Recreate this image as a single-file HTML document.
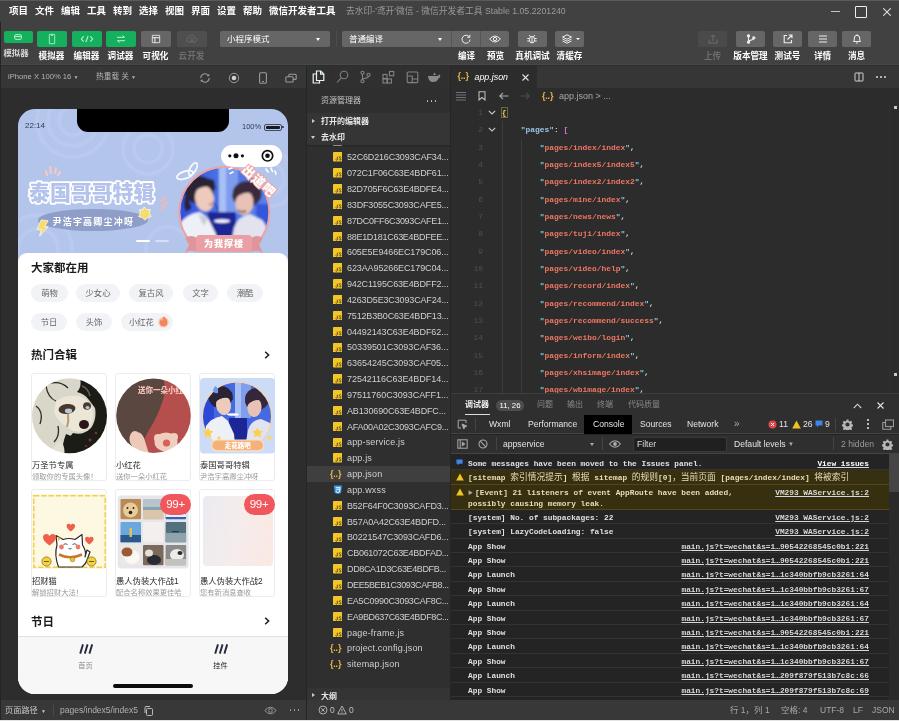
<!DOCTYPE html>
<html lang="zh"><head><meta charset="utf-8"><title>微信开发者工具</title>
<style>
*{box-sizing:border-box;margin:0;padding:0}
html,body{width:899px;height:721px;overflow:hidden;background:#2d2d2d}
body{position:relative;font-family:"Liberation Sans","Noto Sans CJK SC",sans-serif;font-size:9px;color:#ddd;-webkit-font-smoothing:antialiased}
.abs{position:absolute}
#root{position:absolute;left:0;top:0;width:899px;height:721px;will-change:transform}
#title{left:0;top:0;width:899px;height:22px;background:#414141;border-top:1px solid #5a5a5a}
#title .m{position:absolute;top:-1px;height:22px;line-height:22px;font-size:9.5px;color:#fff;font-weight:bold;white-space:nowrap}
#toolbar{left:0;top:22px;width:899px;height:43px;background:#414141;border-bottom:1px solid #484848}
.tb{position:absolute;top:9px;height:16px;border-radius:2px;background:#666}
.tb.g{background:#15b05e}
.tbl{position:absolute;top:28px;height:12px;line-height:12px;font-size:8.600px;color:#fff;font-weight:bold;white-space:nowrap;text-align:center}
.tb svg{position:absolute;left:50%;top:50%;transform:translate(-50%,-50%)}

#simbar{left:0;top:66px;width:306px;height:22px;background:#363636}
#simarea{left:0;top:88px;width:306px;height:612px;background:#2d2d2d}
#phone{left:18px;top:109px;width:270px;height:585px;border-radius:17px;background:#b4c5ec;overflow:hidden}
.ptxt{position:absolute;white-space:nowrap;color:#222}
.tag{position:absolute;height:18px;line-height:18px;border-radius:9px;background:#f1f3f6;color:#666;font-size:8.300px;text-align:center}
.card{position:absolute;width:76px;height:108px;border:1px solid #ececec;border-radius:3px;background:#fff}
.ct{position:absolute;left:0;top:85px;font-size:8.300px;line-height:12px;color:#2a2a2a;white-space:nowrap}
.cs{position:absolute;left:0;top:96px;font-size:7.300px;line-height:13px;height:13px;color:#9a9a9a;white-space:nowrap;width:74px;overflow:hidden}
.badge{position:absolute;width:31px;height:21px;border-radius:10.500px;background:#f0575c;color:#fff;font-size:11.500px;line-height:21px;text-align:center;letter-spacing:-0.3px}

#act{left:307px;top:66px;width:144px;height:22px;background:#303030}
#side{left:307px;top:88px;width:144px;height:612px;background:#2f2f2f}
.sh{position:absolute;left:0;width:144px;height:16px;background:#353535;color:#e6e6e6;font-size:8px;font-weight:bold;line-height:17.600px;padding-left:14px;white-space:nowrap}
.sh:before{content:"";position:absolute;left:5px;top:5.500px;border:2.500px solid transparent;border-left:3.500px solid #ccc}
.sh.open:before{left:4px;top:6.500px;border:2.500px solid transparent;border-top:3.500px solid #ccc}
.fr{position:absolute;left:0;width:144px;height:15.840px;line-height:16.900px;font-size:9px;letter-spacing:-.120px;color:#d0d0d0;padding-left:40px;white-space:nowrap;overflow:hidden}
.fr.sel{background:#3f3f3f}
.fi{position:absolute;left:25.500px;top:3.200px;width:9.400px;height:9.400px}

#edtabs{left:451px;top:66px;width:448px;height:22px;background:#363636}
#editor{left:451px;top:88px;width:448px;height:306px;background:#2c2c2c;overflow:hidden}
.cl{position:absolute;left:0;width:448px;height:17.340px;line-height:17.340px;font-family:"Liberation Mono","Noto Sans Mono CJK SC","Noto Sans CJK SC",monospace;font-size:7.920px;white-space:pre;color:#d4d4d4;font-weight:bold}
.ln{position:absolute;left:0;width:32px;text-align:right;color:#505050;font-weight:normal}
.k{color:#9cc4e4} .q{color:#7fd0e8} .s{color:#ee7762} .p{color:#d8d8d8} .b{color:#d670d6}

#dbg{left:451px;top:397px;width:448px;height:303px;background:#242424;overflow:hidden}
#dbgtop{left:451px;top:393px;width:448px;height:4px;background:#2f2f2f;border-top:1.500px solid #3d3d3d}
.dt{position:absolute;top:0;height:17px;line-height:16px;font-size:8px;color:#8a8a8a;white-space:nowrap}
.vt{position:absolute;top:18px;height:19px;line-height:19px;font-size:8.600px;color:#e4e4e4;white-space:nowrap}
.cr{position:absolute;left:0;width:438px;height:14.400px;line-height:16px;font-family:"Liberation Mono","Noto Sans Mono CJK SC","Noto Sans CJK SC",monospace;font-size:7.820px;font-weight:bold;color:#e0e0e0;white-space:pre;border-bottom:1px solid #333}
.cr .t{position:absolute;left:17px}
.cr .l{position:absolute;right:20px;text-decoration:underline;color:#d8d8d8}
.cr.w{background:#373010;color:#e8deb6;border-bottom:1px solid #54481a}
</style></head>
<body>
<div id="root">
<div id="title" class="abs">
<span class="m" style="left:9px">项目</span>
<span class="m" style="left:35px">文件</span>
<span class="m" style="left:61px">编辑</span>
<span class="m" style="left:87px">工具</span>
<span class="m" style="left:113px">转到</span>
<span class="m" style="left:139px">选择</span>
<span class="m" style="left:165px">视图</span>
<span class="m" style="left:191px">界面</span>
<span class="m" style="left:217px">设置</span>
<span class="m" style="left:243px">帮助</span>
<span class="m" style="left:269px">微信开发者工具</span>
<span class="m" style="left:346px;color:#9a9a9a;font-weight:normal;font-size:8.750px">去水印-'鸢开'微信 - 微信开发者工具 Stable 1.05.2201240</span>
<div class="abs" style="left:831px;top:9.500px;width:8.500px;height:1.200px;background:#c4c4c4"></div>
<div class="abs" style="left:855px;top:5px;width:12px;height:12px;border:1.5px solid #eee;border-radius:1px"></div>
<svg class="abs" style="left:883px;top:7px" width="8" height="8" viewBox="0 0 8 8"><path d="M0.3 0.3L7.7 7.7M7.7 0.3L0.3 7.7" stroke="#ddd" stroke-width="1.1" fill="none"/></svg>
</div>
<div id="toolbar" class="abs">
<div class="tb g" style="left:4px;width:28.500px;height:11.500px"><svg width="8" height="6" viewBox="0 0 8 6" fill="none" stroke="#b8f5d2" stroke-width="1"><rect x=".700" y=".700" width="6.600" height="4.600" rx=".800"/><path d="M.700 2.600h6.600"/></svg></div>
<div class="tbl" style="left:3px;width:26px;top:24.500px;font-size:8.400px;color:#d8d8d8">模拟器</div>
<div class="tb g" style="left:37px;width:29.500px;"><svg width="7" height="11" viewBox="0 0 7 11" fill="none" stroke="#b8f5d2" stroke-width="1"><rect x=".700" y=".700" width="5.600" height="9.600" rx="1"/><path d="M2.500 1.800h2"/></svg></div>
<div class="tbl" style="left:31px;width:41px;">模拟器</div>
<div class="tb g" style="left:72px;width:29.500px;"><svg width="13" height="7" viewBox="0 0 13 7" fill="none" stroke="#b8f5d2" stroke-width="1.100"><path d="M3.200 .800L.800 3.500 3.200 6.200M9.800 .800L12.200 3.500 9.800 6.200M7.600 .500L5.400 6.500"/></svg></div>
<div class="tbl" style="left:66px;width:41px;">编辑器</div>
<div class="tb g" style="left:106px;width:29.500px;"><svg width="9" height="8" viewBox="0 0 9 8" fill="none" stroke="#b8f5d2" stroke-width="1"><path d="M.500 2.300h7.500M6 .500L8 2.300M8.500 5.700H1M3 7.500L1 5.700"/></svg></div>
<div class="tbl" style="left:100px;width:41px;">调试器</div>
<div class="tb " style="left:141px;width:29.500px;"><svg width="9" height="9" viewBox="0 0 9 9" fill="none" stroke="#f0f0f0" stroke-width="1"><rect x=".700" y=".700" width="7.600" height="7.600" rx=".500"/><path d="M.700 3.200h7.600M3.400 3.200v5.100"/></svg></div>
<div class="tbl" style="left:135px;width:41px;">可视化</div>
<div class="tb " style="left:177px;width:29.500px;background:#4f4f4f;"><svg width="12" height="8" viewBox="0 0 12 8" fill="none" stroke="#6a6a6a" stroke-width="1"><path d="M3 7a2.300 2.300 0 0 1 0-4.600A3 3 0 0 1 8.800 2.300 2.400 2.400 0 0 1 9 7z"/><circle cx="6" cy="4.500" r="1.500"/></svg></div>
<div class="tbl" style="left:171px;width:41px;color:#6e6e6e;">云开发</div>
<div class="tb" style="left:220px;width:110px"></div>
<div class="abs" style="left:227px;top:9px;height:16px;line-height:16px;font-size:8.5px;color:#fff">小程序模式</div>
<div class="abs" style="left:316px;top:16px;border:2px solid transparent;border-top:3px solid #fff"></div>
<div class="abs" style="left:336px;top:9px;width:1px;height:16px;background:#4c4c4c"></div>
<div class="tb" style="left:342px;width:167px"></div>
<div class="abs" style="left:349px;top:9px;height:16px;line-height:16px;font-size:8.5px;color:#fff">普通编译</div>
<div class="abs" style="left:438px;top:16px;border:2px solid transparent;border-top:3px solid #fff"></div>
<div class="abs" style="left:451px;top:9px;width:1px;height:16px;background:#555"></div>
<div class="abs" style="left:480px;top:9px;width:1px;height:16px;background:#555"></div>
<svg class="abs" style="left:461px;top:12px" width="10" height="10" viewBox="0 0 10 10" fill="none" stroke="#eee" stroke-width="1"><path d="M8.300 3A4 4 0 1 0 9 5.500"/><path d="M8.800 .800v2.500H6.300"/></svg>
<svg class="abs" style="left:489px;top:13px" width="12" height="8" viewBox="0 0 12 8" fill="none" stroke="#eee" stroke-width="1"><path d="M.600 4Q6-2 11.400 4 6 10 .600 4z"/><circle cx="6" cy="4" r="1.700"/></svg>
<div class="tbl" style="left:446px;width:41px">编译</div>
<div class="tbl" style="left:475px;width:41px">预览</div>
<div class="tb" style="left:518px;width:28.500px"><svg width="11" height="11" viewBox="0 0 11 11" fill="none" stroke="#eee" stroke-width="1"><ellipse cx="5.500" cy="6.200" rx="2.600" ry="3.300"/><path d="M5.500 3v6.500M3.800 3.200L2.800 1.500M7.200 3.200L8.200 1.500M2.900 5H.800M2.900 7.500H.800M8.100 5h2.100M8.100 7.500h2.100"/></svg></div>
<div class="tbl" style="left:511px;width:43px">真机调试</div>
<div class="tb" style="left:555px;width:29px"><svg style="margin-left:-3px" width="11" height="10" viewBox="0 0 11 10" fill="none" stroke="#eee" stroke-width="1"><path d="M5.500 .800L10 3 5.500 5.200 1 3z"/><path d="M1 5l4.500 2.200L10 5M1 7l4.500 2.200L10 7"/></svg><div style="position:absolute;left:21px;top:7px;border:2px solid transparent;border-top:2.500px solid #fff"></div></div>
<div class="tbl" style="left:549px;width:41px">清缓存</div>
<div class="tb" style="left:698px;width:29px;background:#4a4a4a;"><svg width="10" height="10" viewBox="0 0 10 10" fill="none" stroke="#6e6e6e" stroke-width="1"><path d="M1 5.500v3.500h8V5.500M5 7V1M2.800 3L5 .800 7.200 3"/></svg></div>
<div class="tbl" style="left:690px;width:45px;color:#6e6e6e;">上传</div>
<div class="tb" style="left:736px;width:29px;"><svg width="10" height="10" viewBox="0 0 10 10" fill="none" stroke="#eee" stroke-width="1.100"><circle cx="2.500" cy="1.800" r="1.100" fill="#eee"/><circle cx="2.500" cy="8.200" r="1.100" fill="#eee"/><circle cx="7.800" cy="3.800" r="1.100" fill="#eee"/><path d="M2.500 2v6M7.800 4.500c0 2-5.300 1.200-5.300 3"/></svg></div>
<div class="tbl" style="left:728px;width:45px;">版本管理</div>
<div class="tb" style="left:773px;width:29px;"><svg width="10" height="10" viewBox="0 0 10 10" fill="none" stroke="#eee" stroke-width="1.100"><path d="M4 1.500H1.200v7.300h7.300V6M5.800 1h3.200v3.200M9 1L4.500 5.500"/></svg></div>
<div class="tbl" style="left:765px;width:45px;">测试号</div>
<div class="tb" style="left:808px;width:29px;"><svg width="9" height="8" viewBox="0 0 9 8" stroke="#eee" stroke-width="1.100"><path d="M.500 1h8M.500 4h8M.500 7h8"/></svg></div>
<div class="tbl" style="left:800px;width:45px;">详情</div>
<div class="tb" style="left:842px;width:29px;"><svg width="9" height="10" viewBox="0 0 9 10" fill="none" stroke="#eee" stroke-width="1"><path d="M1 7.500h7L7.200 6V4a2.700 2.700 0 0 0-5.400 0v2zM3.600 9h1.800M4.500 .300v1"/></svg></div>
<div class="tbl" style="left:834px;width:45px;">消息</div>
</div>
<div class="abs" style="left:0;top:65px;width:899px;height:1.500px;background:#2c2c2c"></div>
<div id="simbar" class="abs">
<span class="abs" style="left:8px;top:0;line-height:22px;font-size:7.650px;color:#b4b4b4;white-space:nowrap">iPhone X 100% 16 <span style="font-size:5px">▼</span></span>
<span class="abs" style="left:96px;top:0;line-height:22px;font-size:7.700px;color:#b4b4b4;white-space:nowrap">热重载 关 <span style="font-size:5px">▼</span></span>
<svg class="abs" style="left:199px;top:5.500px" width="12" height="12" viewBox="0 0 12 12" fill="none" stroke="#9a9a9a" stroke-width="1.100"><path d="M10.200 6a4.200 4.200 0 0 1-7.400 2.700M1.800 6a4.200 4.200 0 0 1 7.400-2.700"/><path d="M10.300 1.700v2.600H7.700zM1.700 10.300V7.700h2.600z" fill="#9a9a9a" stroke="none"/></svg>
<svg class="abs" style="left:228px;top:5.500px" width="12" height="12" viewBox="0 0 12 12"><circle cx="6" cy="6" r="4.700" fill="none" stroke="#9a9a9a" stroke-width="1"/><circle cx="6" cy="6" r="2.300" fill="#d0d0d0"/></svg>
<svg class="abs" style="left:257px;top:5.500px" width="12" height="12" viewBox="0 0 12 12" fill="none" stroke="#9a9a9a" stroke-width="1.100"><rect x="2.600" y=".800" width="6.800" height="10.400" rx="1"/><path d="M5 9.500h2"/></svg>
<svg class="abs" style="left:285px;top:5.500px" width="12" height="12" viewBox="0 0 12 12" fill="none" stroke="#9a9a9a" stroke-width="1.100"><rect x="3.800" y="2.200" width="7.400" height="5.200" rx="1"/><rect x=".800" y="4.800" width="7.400" height="5.200" rx="1" fill="#363636"/></svg>
</div>
<div id="simarea" class="abs"></div>
<div id="phone" class="abs">
<svg class="abs" style="left:0;top:0" width="270" height="150" viewBox="0 0 270 150"><g fill="none" stroke="#bfcdf1" stroke-width="4" opacity=".5"><circle cx="55" cy="12" r="14"/><circle cx="55" cy="12" r="25"/><circle cx="55" cy="12" r="36"/><circle cx="130" cy="40" r="14"/><circle cx="130" cy="40" r="25"/><circle cx="250" cy="70" r="16"/><circle cx="250" cy="70" r="28"/><circle cx="20" cy="140" r="20"/><circle cx="20" cy="140" r="34"/><circle cx="150" cy="140" r="22"/></g></svg>
<div class="abs" style="left:59px;top:0;width:152px;height:23px;background:#000;border-radius:0 0 11px 11px"></div>
<div class="ptxt" style="left:7px;top:11px;font-size:8px;line-height:11px;color:#333a55">22:14</div>
<div class="ptxt" style="left:224px;top:12px;font-size:7.5px;line-height:11px;color:#333a55">100%</div>
<div class="abs" style="left:246px;top:14.500px;width:17.500px;height:7px;border:1px solid #444a66;border-radius:2px"><div style="position:absolute;left:1px;top:1px;right:1px;bottom:1px;background:#1a1a1a;border-radius:1px"></div></div>
<div class="abs" style="left:264px;top:16.800px;width:1.500px;height:2.500px;background:#333a55;border-radius:0 1px 1px 0"></div>
<div class="abs" style="left:203px;top:36px;width:61px;height:22px;border-radius:11px;background:#fff"></div>
<svg class="abs" style="left:203px;top:36px" width="61" height="22" viewBox="0 0 61 22"><circle cx="8.800" cy="10.800" r="1.600" fill="#111"/><circle cx="15" cy="10.800" r="2.500" fill="#111"/><circle cx="21.400" cy="10.800" r="1.600" fill="#111"/><circle cx="46.500" cy="10.800" r="5.200" fill="none" stroke="#111" stroke-width="1.700"/><circle cx="46.500" cy="10.800" r="2.300" fill="#111"/></svg>
<svg class="abs" style="left:4px;top:62px" width="150" height="40" viewBox="0 0 150 40"><text x="7" y="28.500" font-family='"Liberation Sans","Noto Sans CJK SC",sans-serif' font-size="20.900" font-weight="900" fill="#b3c3ee" stroke="#fff" stroke-width="3.600" stroke-linejoin="round" paint-order="stroke" style="paint-order:stroke">泰国哥哥特辑</text></svg>
<svg class="abs" style="left:26px;top:55px" width="18" height="14" viewBox="0 0 18 14" fill="none" stroke="#f5c9c5" stroke-width="2.2" stroke-linecap="round"><path d="M3 11L2 7M7 9L6 3M11 9l1-5M14 11l2-3"/></svg>
<svg class="abs" style="left:139px;top:87px" width="12" height="15" viewBox="0 0 12 15" fill="none" stroke="#f3b7b4" stroke-width="2" stroke-linecap="round"><path d="M8.500 1.500q-3 1-4 3.500M10 6q-3 1-4 3.500M7 11q-2 .500-3 2"/></svg>
<div class="abs" style="left:20px;top:99.500px;width:110px;height:22px;border-radius:50%;background:#8f9dc9"></div>
<div class="ptxt" style="left:34.500px;top:106.800px;font-size:9px;line-height:12px;color:#fff;font-weight:bold;letter-spacing:1.2px">尹浩宇高卿尘冲呀</div>
<svg class="abs" style="left:19px;top:110px" width="12" height="19" viewBox="0 0 14 20"><path d="M5 0l8 1-4 7h4L3 19l2-8H0z" fill="#f6dc6a" stroke="#fff" stroke-width=".8"/></svg>
<svg class="abs" style="left:117.500px;top:97px" width="16" height="16" viewBox="0 0 18 18"><path d="M9 1l3 3 4 0-1 4 2 4-4 1-3 3-3-3-4-1 2-4-1-4 4 0z" fill="#f6dc6a" stroke="#fff" stroke-width=".8"/></svg>
<div class="abs" style="left:118px;top:131px;width:14px;height:2px;border-radius:1px;background:#fff"></div>
<div class="abs" style="left:137px;top:131px;width:14px;height:2px;border-radius:1px;background:rgba(255,255,255,.45)"></div>
<svg class="abs" style="left:150px;top:45px" width="120" height="105" viewBox="0 0 120 105"><defs><clipPath id="cp1"><circle cx="56.4" cy="58" r="44.5"/></clipPath><clipPath id="cp1r"><rect x="0" y="0" width="120" height="97"/></clipPath><linearGradient id="bg1" x1="0" y1="0" x2="1" y2="0"><stop offset="0" stop-color="#2c4be0"/><stop offset=".4" stop-color="#466ee2"/><stop offset="1" stop-color="#5d84ea"/></linearGradient><filter id="bl1" x="-5%" y="-5%" width="110%" height="110%"><feGaussianBlur stdDeviation=".9"/></filter></defs><g fill="none" stroke="#fff" stroke-width="1.700" opacity=".92"><ellipse cx="17" cy="21" rx="8.500" ry="3.600" transform="rotate(-18 17 21)"/><ellipse cx="25" cy="15" rx="7" ry="3" transform="rotate(-60 25 15)"/></g><g clip-path="url(#cp1r)"><g clip-path="url(#cp1)"><g filter="url(#bl1)"><rect x="6" y="8" width="102" height="100" fill="url(#bg1)"/><rect x="51" y="8" width="7" height="52" fill="#a9c0f4"/><rect x="58" y="8" width="12" height="52" fill="#7d9cee"/><rect x="40" y="58" width="28" height="45" fill="#1d2596"/><rect x="88" y="50" width="14" height="30" fill="#3457da"/><ellipse cx="31" cy="36" rx="15" ry="14" fill="#2a2236"/><path d="M18 40q-4 10 0 18l6-4z" fill="#2a2236"/><ellipse cx="36.500" cy="44.500" rx="9.500" ry="13" fill="#eccabc" transform="rotate(-8 36.500 44.500)"/><path d="M20 36q6-16 26-10l2 10q-8-6-16-2-6 2-8 10z" fill="#2a2236"/><path d="M41 50q3 1 4 0" stroke="#c8707a" stroke-width="1.500" fill="none"/><ellipse cx="79" cy="40" rx="14.500" ry="13" fill="#3a2a3a"/><ellipse cx="76.500" cy="49" rx="9" ry="12" fill="#e8c2b6" transform="rotate(6 76.500 49)"/><path d="M64 42q4-14 24-10l4 12q-10-8-18-4-6 2-8 8z" fill="#3a2a3a"/><path d="M70 56q3 3 8 1" stroke="#5a3a3a" stroke-width="1.500" fill="none"/><path d="M8 104l4-34q6-10 20-12l8 6 8 16 4 24z" fill="#eef0f7"/><path d="M30 60l6 12 4-8z" fill="#c8ccd8"/><path d="M60 104l6-30q4-12 16-14l12 6q8 8 10 38z" fill="#e2e3ee"/><ellipse cx="54" cy="67" rx="8" ry="1.800" fill="#fff"/><path d="M44 47q6 4 6 10" stroke="#222" stroke-width="1" fill="none"/></g></g><circle cx="56.400" cy="58" r="45" fill="none" stroke="#eaa4a8" stroke-width="2"/></g><path d="M17 84q6-4 12 0v14q-6-3-12 1l4-8z" fill="#e0949c"/><path d="M95 84q-6-4-12 0v14q6-3 12 1l-4-8z" fill="#e0949c"/><rect x="28" y="81" width="56" height="17" rx="4" fill="#e99fa5"/><text x="56" y="93.300" text-anchor="middle" font-family='"Liberation Sans","Noto Sans CJK SC",sans-serif' font-size="9" font-weight="900" fill="#fff" letter-spacing="1">为我撑楼</text><text x="0" y="0" transform="translate(73 17) rotate(42)" font-family='"Liberation Sans","Noto Sans CJK SC",sans-serif' font-size="12.500" font-weight="900" fill="#fff" stroke="#f0a5a2" stroke-width="2" paint-order="stroke" style="paint-order:stroke" letter-spacing="1">出道吧</text><g stroke="#fff" stroke-width="1.600" stroke-linecap="round"><path d="M98 15l2 3M103 14l1.500 3.500M107 17l1 3"/><path d="M64 14l-3 1M65 18l-3 1.500"/></g></svg>
<div class="abs" style="left:0;top:144px;width:270px;height:442px;background:#fff;border-radius:9px 9px 0 0"></div>
<div class="ptxt" style="left:13px;top:151px;font-size:11.500px;line-height:16px;font-weight:bold;color:#1a1a1a">大家都在用</div>
<div class="tag" style="left:13px;top:175px;width:37px">萌物</div>
<div class="tag" style="left:58px;top:175px;width:44px">少女心</div>
<div class="tag" style="left:111px;top:175px;width:44px">复古风</div>
<div class="tag" style="left:165px;top:175px;width:35px">文字</div>
<div class="tag" style="left:209px;top:175px;width:36px">潮酷</div>
<div class="tag" style="left:13px;top:204px;width:36px">节日</div>
<div class="tag" style="left:58px;top:204px;width:36px">头饰</div>
<div class="tag" style="left:103px;top:204px;width:52px;text-align:left;padding-left:8px">小红花</div>
<svg class="abs" style="left:140px;top:206px" width="11" height="13" viewBox="0 0 11 13"><circle cx="5.500" cy="7.300" r="5.200" fill="#f8c6ac"/><path d="M5.600 1.200c2.800 2.200 3.700 4.200 3.700 6.200a3.800 3.800 0 0 1-7.600 0c0-1.400.700-2.600 1.600-3.500.200 1.200.800 1.700 1.300 1.900-.200-1.800.200-3.200 1-4.600z" fill="#f0865c"/></svg>
<div class="ptxt" style="left:13px;top:238px;font-size:11.500px;line-height:16px;font-weight:bold;color:#1a1a1a">热门合辑</div>
<svg class="abs" style="left:246px;top:242px" width="6" height="8" viewBox="0 0 6 8"><path d="M1.200 .8L4.600 4 1.200 7.200" fill="none" stroke="#1a1a1a" stroke-width="1.500"/></svg>
<div class="card" style="left:13px;top:264px"><svg style="position:absolute;left:0;top:3.500px" width="75" height="76" viewBox="0 0 75 76"><defs><clipPath id="c1"><circle cx="37.500" cy="37.800" r="37.500"/></clipPath><filter id="bl2" x="-5%" y="-5%" width="110%" height="110%"><feGaussianBlur stdDeviation=".600"/></filter></defs><g clip-path="url(#c1)"><g filter="url(#bl2)"><rect x="-3" y="-3" width="81" height="82" fill="#1b1c17"/><path d="M-3-3H47Q51 8 45 14 53 16 57 22L63 30Q65 41 59 50 51 58 41 55L35 62Q31 70 29 79H-3Z" fill="#d9d7c9"/><path d="M24 23Q36 15 50 19 60 24 61 34 62 46 54 52 44 56 36 50 26 44 22 34Z" fill="#ebe6d6"/><path d="M34 56Q44 61 53 55L62 79H30Q30 66 34 56Z" fill="#1b1c17"/><path d="M28 62q6 6 4 17H14z" fill="#e4e1d4"/><ellipse cx="35" cy="31" rx="8.500" ry="5" fill="#4a3832" transform="rotate(-8 35 31)"/><ellipse cx="36.500" cy="33" rx="3.600" ry="2.400" fill="#bcc8d0"/><ellipse cx="55" cy="28" rx="4" ry="3.800" fill="#4a3a3a"/><ellipse cx="55.500" cy="29.500" rx="2" ry="1.600" fill="#bcc8d0"/><path d="M36 36q1 7-1 13" stroke="#9a7a4a" stroke-width="2" fill="none" opacity=".700"/><ellipse cx="52" cy="46.500" rx="5" ry="4.500" fill="#2a1818"/><path d="M14 8q2 12 10 15M16 6q12-4 20 4M4 28q8 6 4 18M-2 30q-4 8 2 14M26 48q2 10-4 16" stroke="#2a2a22" stroke-width="1.300" fill="none"/><circle cx="58" cy="62" r="1.500" fill="#8a3028"/><circle cx="64" cy="55" r="1.200" fill="#8a3028"/><circle cx="54" cy="68" r="1" fill="#8a3028"/><path d="M50 8q6 2 8 10" stroke="#6a5a5a" stroke-width="1.500" fill="none"/></g></g></svg><div class="ct">万圣节专属</div><div class="cs">领取你的专属头像！</div></div>
<div class="card" style="left:97px;top:264px"><svg style="position:absolute;left:0;top:3.500px" width="75" height="76" viewBox="0 0 75 76"><defs><clipPath id="c2"><circle cx="37.500" cy="37.800" r="37.300"/></clipPath></defs><g clip-path="url(#c2)"><g filter="url(#bl2)"><rect x="-3" y="-3" width="81" height="82" fill="#b5504d"/><path d="M-3-3H46Q51 10 47 22 41 40 33 52 27 62 22 79H-3Z" fill="#5a4640"/><path d="M16 58q8-8 12 2l6 19H22q-2-8-6-10z" fill="#eec8b8"/><ellipse cx="19" cy="61" rx="5.500" ry="8" fill="#eec8b8"/><ellipse cx="50" cy="64" rx="11.500" ry="9.500" fill="#f0cdbd"/><circle cx="42" cy="60" r="4" fill="#f0cdbd"/><circle cx="58" cy="59" r="4" fill="#f0cdbd"/><circle cx="50.500" cy="65" r="3.600" fill="#d8605a"/></g><text x="22" y="14.500" font-family='"Liberation Sans","Noto Sans CJK SC",sans-serif' font-size="7.500" font-weight="900" fill="#f4c0b8">送你一朵小红花</text></g></svg><div class="ct">小红花</div><div class="cs">送你一朵小红花</div></div>
<div class="card" style="left:181px;top:264px"><svg style="position:absolute;left:0;top:3.500px" width="75" height="76" viewBox="0 0 75 76"><defs><clipPath id="c3"><circle cx="37" cy="38.500" r="34"/></clipPath><clipPath id="c3b"><rect width="75" height="75.500" rx="4"/></clipPath></defs><g clip-path="url(#c3b)"><rect width="75" height="76" fill="#ccdcf6"/><circle cx="37" cy="38.500" r="35.300" fill="#f3d3b4"/><g clip-path="url(#c3)"><g filter="url(#bl2)"><rect width="75" height="76" fill="#4569de"/><rect x="0" y="20" width="14" height="30" fill="#2b4ad8"/><rect x="35" y="0" width="6" height="40" fill="#a9c0f4"/><rect x="41" y="0" width="10" height="40" fill="#7f9fee"/><rect x="29" y="40" width="18" height="30" fill="#1d2596"/><ellipse cx="20.500" cy="19" rx="12" ry="11" fill="#2a2236"/><ellipse cx="23.500" cy="27" rx="7.500" ry="10" fill="#eccabc" transform="rotate(-8 23.500 27)"/><path d="M10 22q5-13 22-8l1 8q-6-4-13-1-5 2-6 8z" fill="#2a2236"/><ellipse cx="57" cy="21" rx="12" ry="11" fill="#34263a"/><ellipse cx="54.500" cy="29.500" rx="7" ry="9.500" fill="#e8c2b6" transform="rotate(6 54.500 29.500)"/><path d="M45 24q4-12 20-8l3 10q-8-6-15-3-5 2-6 6z" fill="#34263a"/><path d="M2 76l4-28q5-8 16-10l6 5 6 13 2 20z" fill="#eef0f7"/><path d="M44 76l4-24q3-10 13-11l9 4q6 7 8 31z" fill="#e2e3ee"/><ellipse cx="33" cy="36.500" rx="6" ry="1.300" fill="#fff"/></g></g><rect x="11.700" y="62" width="52" height="10.800" rx="5.400" fill="#f4b27a" stroke="#fbe0c4" stroke-width="1.200"/><text x="37.700" y="70" text-anchor="middle" font-family='"Liberation Sans","Noto Sans CJK SC",sans-serif' font-size="6.500" font-weight="900" fill="#fff">走花路吧</text><path d="M8 49.500l1.700 3.300 3.600.500-2.600 2.500.600 3.600L8 57.700l-3.300 1.700.600-3.600-2.600-2.500 3.600-.500z" fill="#f8d24c"/><path d="M57.500 49.500l1.700 3.300 3.600.500-2.600 2.500.600 3.600-3.300-1.700-3.300 1.700.600-3.600-2.600-2.500 3.600-.500z" fill="#f8d24c"/><circle cx="69.500" cy="60" r="2.200" fill="#f8d86a"/><circle cx="19" cy="60" r="1.800" fill="#f8d86a"/><path d="M15 8q4 2 3 7-4 1-5-3z" fill="#6a9af0"/></g></svg><div class="ct">泰国哥哥特辑</div><div class="cs">尹浩宇高卿尘冲呀</div></div>
<div class="card" style="left:13px;top:380px"><svg style="position:absolute;left:0;top:3.800px" width="75" height="75" viewBox="0 0 75 75"><rect x="0" y="0" width="75" height="75" fill="#fdf8e2"/><rect x="1.800" y="1.800" width="71.400" height="71.400" fill="none" stroke="#efd054" stroke-width="1.500" stroke-dasharray="5.500 1.800"/><path d="M26.500 73Q22 61 25 51L24 41.500 31 45.500Q37 43.500 43 45.500L50 40.500 50.500 51Q55 58 53 63L55 56 58 58 55 66Q54 70 50 73Z" fill="#fff" stroke="#2a2a2a" stroke-width="1.200" stroke-linejoin="round"/><path d="M27 60.500Q38 66 50 60.500" stroke="#c8762a" stroke-width="2.600" fill="none"/><circle cx="40.500" cy="65.500" r="2.300" fill="#f0c030" stroke="#8a6a10" stroke-width=".500"/><circle cx="29.500" cy="53" r="2.400" fill="#ee7a6a"/><circle cx="46" cy="53" r="2.400" fill="#ee7a6a"/><path d="M31.500 50.500q2-1.500 4 0M40.500 50.500q2-1.500 4 0M36.500 54.500q1.500 1 3 0" stroke="#2a2a2a" stroke-width=".800" fill="none"/><path d="M25.500 42.500l3.500 2-3 2.500z" fill="#f0c030"/><path d="M11 43.500q0-3.500 3.500-3.500 2 0 3 2 1-2 3-2 3.500 0 3.500 3.500 0 3.500-6.500 8-6.500-4.500-6.500-8z" fill="#ee5f4c"/><path d="M34.500 32q0-2.300 2.300-2.300 1.300 0 2 1.300.700-1.300 2-1.300 2.300 0 2.300 2.300 0 2.400-4.300 5.400-4.300-3-4.300-5.400z" fill="#ee5f4c"/><path d="M53 45q0-2.300 2.300-2.300 1.300 0 2 1.300.700-1.300 2-1.300 2.300 0 2.300 2.300 0 2.400-4.300 5.400-4.300-3-4.300-5.400z" fill="#ee5f4c"/><circle cx="14.500" cy="67.500" r="4.600" fill="#f3d23a" stroke="#7a5e10" stroke-width=".700"/><circle cx="59.500" cy="67.500" r="4.600" fill="#f3d23a" stroke="#7a5e10" stroke-width=".700"/><path d="M12 67.500h5M57 67.500h5" stroke="#7a5e10" stroke-width="1.200"/></svg><div class="ct">招财猫</div><div class="cs">解锁招财大法！</div></div>
<div class="card" style="left:97px;top:380px"><svg style="position:absolute;left:0;top:5px" width="75" height="75" viewBox="0 0 75 75"><defs><filter id="bl3" x="-5%" y="-5%" width="110%" height="110%"><feGaussianBlur stdDeviation=".500"/></filter></defs><rect x="1.700" y=".500" width="71" height="73" rx="4" fill="#e7e5ea"/><g filter="url(#bl3)"><rect x="4.5" y="4" width="20.500" height="20.300" rx="1" fill="#b98a52"/><rect x="27" y="4" width="20.500" height="20.300" rx="1" fill="#b8c4cc"/><rect x="49.6" y="4" width="20.500" height="20.300" rx="1" fill="#3262ba"/><rect x="4.5" y="27" width="20.500" height="20.300" rx="1" fill="#6aa8dc"/><rect x="27" y="27" width="20.500" height="20.300" rx="1" fill="#f4efef"/><rect x="49.6" y="27" width="20.500" height="20.300" rx="1" fill="#52707e"/><rect x="4.5" y="50" width="20.500" height="20.300" rx="1" fill="#ece8e4"/><rect x="27" y="50" width="20.500" height="20.300" rx="1" fill="#7a6a5c"/><rect x="49.6" y="50" width="20.500" height="20.300" rx="1" fill="#8a8a8a"/><ellipse cx="14.500" cy="15" rx="7.500" ry="7.500" fill="#e6cc9c"/><circle cx="14.500" cy="17.500" r="1.800" fill="#2a1a10"/><circle cx="11.500" cy="13" r=".900" fill="#2a1a10"/><circle cx="17.500" cy="13" r=".900" fill="#2a1a10"/><rect x="27" y="15" width="20.500" height="9.300" fill="#d9c6aa"/><rect x="27" y="12" width="20.500" height="3" fill="#8aa0b0"/><rect x="49.600" y="19" width="20.500" height="3" fill="#e8eef8"/><rect x="4.500" y="40" width="20.500" height="7.300" fill="#2a5a8c"/><rect x="13.500" y="33" width="2.500" height="9" fill="#e0c060"/><rect x="49.600" y="38" width="20.500" height="9.300" fill="#8ea4ac"/><rect x="56" y="36" width="7" height="1.200" fill="#2a3a44"/><ellipse cx="16" cy="62" rx="7.500" ry="7" fill="#faf8f4"/><ellipse cx="11" cy="57" rx="5.500" ry="4.500" fill="#9a5a30"/><ellipse cx="38" cy="65" rx="7" ry="5" fill="#2a2a30"/><ellipse cx="33" cy="58" rx="4" ry="3.500" fill="#e8e0d8"/><ellipse cx="61" cy="60" rx="7" ry="6" fill="#ecebe8"/><ellipse cx="64" cy="58" rx="2.500" ry="2" fill="#2a2a2a"/><rect x="49.600" y="64" width="20.500" height="6.300" fill="#c4c2be"/></g></svg><div class="badge" style="left:44px;top:4px">99+</div><div class="ct">愚人伪装大作战1</div><div class="cs">配合名称效果更佳哈</div></div>
<div class="card" style="left:181px;top:380px"><div style="position:absolute;left:2.500px;top:6px;width:70px;height:70px;border-radius:4px;background:linear-gradient(100deg,#ecebf0 0%,#f5ecec 50%,#fbe8e2 100%)"></div><div class="badge" style="left:43.500px;top:4px">99+</div><div class="ct">愚人伪装大作战2</div><div class="cs">您有新消息查收</div></div>
<div class="ptxt" style="left:13px;top:504.500px;font-size:11.500px;line-height:16px;font-weight:bold;color:#1a1a1a">节日</div>
<svg class="abs" style="left:246px;top:508px" width="6" height="8" viewBox="0 0 6 8"><path d="M1.200 .800L4.600 4 1.200 7.200" fill="none" stroke="#1a1a1a" stroke-width="1.500"/></svg>
<div class="abs" style="left:0;top:527px;width:270px;height:59px;background:#f7f7f7;border-top:1px solid #e2e2e2"></div>
<svg class="abs" style="left:60.5px;top:535px" width="15" height="10" viewBox="0 0 15 10" stroke="#262a3e" stroke-width="1.900" fill="none"><path d="M4 .400L1.200 9.600M8.600 .400L5.800 9.600M13.200 .400L10.400 9.600"/></svg>
<div class="ptxt" style="left:47.5px;width:40px;text-align:center;top:552px;font-size:7.200px;line-height:10px;color:#888">首页</div>
<svg class="abs" style="left:195.5px;top:535px" width="15" height="10" viewBox="0 0 15 10" stroke="#262a3e" stroke-width="1.900" fill="none"><path d="M4 .400L1.200 9.600M8.600 .400L5.800 9.600M13.200 .400L10.400 9.600"/></svg>
<div class="ptxt" style="left:182.5px;width:40px;text-align:center;top:552px;font-size:7.200px;line-height:10px;color:#222">挂件</div>
<div class="abs" style="left:95px;top:574.800px;width:80px;height:4.300px;border-radius:2.200px;background:#0c0c0c"></div>
</div>
<div class="abs" style="left:0;top:700px;width:306px;height:21px;background:#383838"></div>
<div class="abs" style="left:5px;top:700px;line-height:21px;font-size:8.200px;color:#c8c8c8;white-space:nowrap">页面路径 <span style="font-size:5px;position:relative;left:1px">▼</span></div>
<div class="abs" style="left:53px;top:705px;width:1px;height:11px;background:#4a4a4a"></div>
<div class="abs" style="left:60px;top:700px;line-height:21px;font-size:8.500px;color:#b0b0b0;white-space:nowrap">pages/index5/index5</div>
<svg class="abs" style="left:144px;top:706px" width="9" height="10" viewBox="0 0 9 10" fill="none" stroke="#bbb" stroke-width="1"><rect x="2.500" y="2.500" width="6" height="7" rx="1"/><path d="M1 7V1.500a1 1 0 0 1 1-1h4"/></svg>
<svg class="abs" style="left:264px;top:706px" width="13" height="9" viewBox="0 0 13 9" fill="none" stroke="#999" stroke-width="1"><path d="M.800 4.500Q6.500-2 12.200 4.500 6.500 11 .800 4.500z"/><circle cx="6.500" cy="4.500" r="1.800"/></svg>
<div class="abs" style="left:289.5px;top:709.3px;width:1.600px;height:1.600px;border-radius:50%;background:#aaa;box-shadow:4px 0 0 #aaa,8px 0 0 #aaa"></div>
<div class="abs" style="left:306px;top:66px;width:1px;height:655px;background:#252525"></div>
<div id="act" class="abs">
<svg class="abs" style="left:5px;top:4px" width="13" height="14" viewBox="0 0 13 14" fill="none" stroke="#e8f4f4" stroke-width="1.200"><path d="M4.500 1h4.300l3 3v6.500h-7.300z"/><path d="M8.600 1v3.200h3.200"/><path d="M4.300 4H1.200v9h6.300v-2.300"/></svg>
<svg class="abs" style="left:29px;top:4px" width="13" height="14" viewBox="0 0 13 14" fill="none" stroke="#828282" stroke-width="1.100"><circle cx="8" cy="5" r="3.800"/><path d="M5.300 7.800L1 12.500"/></svg>
<svg class="abs" style="left:52px;top:4px" width="13" height="14" viewBox="0 0 13 14" fill="none" stroke="#828282" stroke-width="1.100"><circle cx="3.500" cy="2.800" r="1.600"/><circle cx="3.500" cy="11.200" r="1.600"/><circle cx="9.500" cy="4.800" r="1.600"/><path d="M3.500 4.400v5.200M9.500 6.400c0 2.500-6 1.500-6 3.200"/></svg>
<svg class="abs" style="left:75px;top:4px" width="13" height="14" viewBox="0 0 13 14" fill="none" stroke="#828282" stroke-width="1.100"><rect x="1" y="4.500" width="4" height="4"/><rect x="1" y="9" width="4" height="4"/><rect x="5.500" y="9" width="4" height="4"/><rect x="7.500" y="1.500" width="4.200" height="4.200"/></svg>
<svg class="abs" style="left:99px;top:4px" width="13" height="14" viewBox="0 0 13 14" fill="none" stroke="#828282" stroke-width="1.100"><rect x="1.200" y="2" width="10.600" height="10.600" rx="1"/><path d="M1.200 6h5v3h5.600M6.200 9v3.600"/></svg>
<svg class="abs" style="left:120px;top:5px" width="14" height="12" viewBox="0 0 14 12"><path d="M1 5h9q2 0 3-2 .800 3-1.500 4.500Q10 11 6 11 1.500 11 1 5z" fill="#8a8a8a"/><path d="M7.500 1.500l1.500 2.500h-3z" fill="#8a8a8a"/></svg>
</div>
<div id="side" class="abs">
<div class="abs" style="left:14px;top:7px;font-size:8px;line-height:12px;color:#c4c4c4;white-space:nowrap">资源管理器</div>
<div class="abs" style="left:119.5px;top:12.2px;width:1.600px;height:1.600px;border-radius:50%;background:#ccc;box-shadow:4px 0 0 #ccc,8px 0 0 #ccc"></div>
<div class="sh" style="top:25px">打开的编辑器</div>
<div class="sh open" style="top:41px">去水印</div>
<div class="abs" style="left:0;top:57px;width:144px;height:2px;background:linear-gradient(#222,rgba(34,34,34,0))"></div>
<div class="abs" style="left:25.500px;top:57.300px;width:9px;height:1.200px;background:#8f8c78"></div>
<div class="fr" style="top:61.30px;letter-spacing:-0.17px;"><svg class="fi" viewBox="0 0 10 10"><rect width="10" height="10" rx=".800" fill="#f2c62b"/><path d="M4.600 5v2.800q0 .900-.900.900-.700 0-.900-.600M8.600 5.600q-.300-.600-1-.600-.900 0-.900.800 0 .600.900.900.900.300.900 1 0 .900-1 .900-.800 0-1.100-.700" stroke="#4a3a08" stroke-width=".900" fill="none"/></svg>52C6D216C3093CAF34...</div>
<div class="fr" style="top:77.14px;letter-spacing:-0.17px;"><svg class="fi" viewBox="0 0 10 10"><rect width="10" height="10" rx=".800" fill="#f2c62b"/><path d="M4.600 5v2.800q0 .900-.900.900-.700 0-.900-.600M8.600 5.600q-.300-.600-1-.600-.900 0-.900.800 0 .600.900.900.900.300.900 1 0 .900-1 .900-.800 0-1.100-.700" stroke="#4a3a08" stroke-width=".900" fill="none"/></svg>072C1F06C63E4BDF61...</div>
<div class="fr" style="top:92.98px;letter-spacing:-0.217px;"><svg class="fi" viewBox="0 0 10 10"><rect width="10" height="10" rx=".800" fill="#f2c62b"/><path d="M4.600 5v2.800q0 .900-.900.900-.700 0-.900-.600M8.600 5.600q-.300-.600-1-.600-.900 0-.900.800 0 .600.900.900.900.300.900 1 0 .900-1 .900-.800 0-1.100-.700" stroke="#4a3a08" stroke-width=".900" fill="none"/></svg>82D705F6C63E4BDFE4...</div>
<div class="fr" style="top:108.82px;letter-spacing:-0.17px;"><svg class="fi" viewBox="0 0 10 10"><rect width="10" height="10" rx=".800" fill="#f2c62b"/><path d="M4.600 5v2.800q0 .900-.900.900-.700 0-.900-.600M8.600 5.600q-.300-.600-1-.600-.900 0-.900.800 0 .600.900.900.900.300.900 1 0 .900-1 .900-.800 0-1.100-.700" stroke="#4a3a08" stroke-width=".900" fill="none"/></svg>83DF3055C3093CAFE5...</div>
<div class="fr" style="top:124.66px;letter-spacing:-0.264px;"><svg class="fi" viewBox="0 0 10 10"><rect width="10" height="10" rx=".800" fill="#f2c62b"/><path d="M4.600 5v2.800q0 .900-.900.900-.700 0-.900-.600M8.600 5.600q-.300-.600-1-.600-.900 0-.900.800 0 .600.900.900.900.300.900 1 0 .900-1 .900-.800 0-1.100-.700" stroke="#4a3a08" stroke-width=".900" fill="none"/></svg>87DC0FF6C3093CAFE1...</div>
<div class="fr" style="top:140.50px;letter-spacing:-0.289px;"><svg class="fi" viewBox="0 0 10 10"><rect width="10" height="10" rx=".800" fill="#f2c62b"/><path d="M4.600 5v2.800q0 .900-.900.900-.700 0-.900-.600M8.600 5.600q-.300-.600-1-.600-.900 0-.900.800 0 .600.900.900.900.300.900 1 0 .900-1 .900-.800 0-1.100-.700" stroke="#4a3a08" stroke-width=".900" fill="none"/></svg>88E1D181C63E4BDFEE...</div>
<div class="fr" style="top:156.34px;letter-spacing:-0.1px;"><svg class="fi" viewBox="0 0 10 10"><rect width="10" height="10" rx=".800" fill="#f2c62b"/><path d="M4.600 5v2.800q0 .900-.900.900-.700 0-.900-.600M8.600 5.600q-.300-.600-1-.600-.900 0-.900.800 0 .600.900.900.900.300.900 1 0 .900-1 .900-.800 0-1.100-.700" stroke="#4a3a08" stroke-width=".900" fill="none"/></svg>605E5E9466EC179C06...</div>
<div class="fr" style="top:172.18px;letter-spacing:-0.1px;"><svg class="fi" viewBox="0 0 10 10"><rect width="10" height="10" rx=".800" fill="#f2c62b"/><path d="M4.600 5v2.800q0 .900-.900.900-.700 0-.900-.600M8.600 5.600q-.300-.600-1-.600-.900 0-.900.800 0 .600.900.900.900.300.900 1 0 .900-1 .900-.800 0-1.100-.700" stroke="#4a3a08" stroke-width=".900" fill="none"/></svg>623AA95266EC179C04...</div>
<div class="fr" style="top:188.02px;letter-spacing:-0.138px;"><svg class="fi" viewBox="0 0 10 10"><rect width="10" height="10" rx=".800" fill="#f2c62b"/><path d="M4.600 5v2.800q0 .900-.900.900-.700 0-.900-.600M8.600 5.600q-.300-.600-1-.600-.900 0-.900.800 0 .600.900.900.900.300.900 1 0 .900-1 .900-.800 0-1.100-.700" stroke="#4a3a08" stroke-width=".900" fill="none"/></svg>942C1195C63E4BDFF2...</div>
<div class="fr" style="top:203.86px;letter-spacing:-0.147px;"><svg class="fi" viewBox="0 0 10 10"><rect width="10" height="10" rx=".800" fill="#f2c62b"/><path d="M4.600 5v2.800q0 .900-.900.900-.700 0-.900-.600M8.600 5.600q-.300-.600-1-.600-.900 0-.900.800 0 .600.900.900.900.300.900 1 0 .900-1 .900-.800 0-1.100-.700" stroke="#4a3a08" stroke-width=".900" fill="none"/></svg>4263D5E3C3093CAF24...</div>
<div class="fr" style="top:219.70px;letter-spacing:-0.17px;"><svg class="fi" viewBox="0 0 10 10"><rect width="10" height="10" rx=".800" fill="#f2c62b"/><path d="M4.600 5v2.800q0 .900-.900.900-.700 0-.900-.600M8.600 5.600q-.300-.600-1-.600-.900 0-.900.800 0 .600.900.900.900.300.900 1 0 .900-1 .900-.800 0-1.100-.700" stroke="#4a3a08" stroke-width=".900" fill="none"/></svg>7512B3B0C63E4BDF13...</div>
<div class="fr" style="top:235.54px;letter-spacing:-0.075px;"><svg class="fi" viewBox="0 0 10 10"><rect width="10" height="10" rx=".800" fill="#f2c62b"/><path d="M4.600 5v2.800q0 .900-.900.900-.700 0-.900-.600M8.600 5.600q-.300-.600-1-.600-.900 0-.900.800 0 .600.900.900.900.300.900 1 0 .900-1 .900-.800 0-1.100-.700" stroke="#4a3a08" stroke-width=".900" fill="none"/></svg>04492143C63E4BDF62...</div>
<div class="fr" style="top:251.38px;letter-spacing:-0.028px;"><svg class="fi" viewBox="0 0 10 10"><rect width="10" height="10" rx=".800" fill="#f2c62b"/><path d="M4.600 5v2.800q0 .900-.900.900-.700 0-.900-.600M8.600 5.600q-.300-.600-1-.600-.900 0-.900.800 0 .600.900.900.900.300.900 1 0 .900-1 .900-.800 0-1.100-.700" stroke="#4a3a08" stroke-width=".900" fill="none"/></svg>50339501C3093CAF36...</div>
<div class="fr" style="top:267.22px;letter-spacing:-0.028px;"><svg class="fi" viewBox="0 0 10 10"><rect width="10" height="10" rx=".800" fill="#f2c62b"/><path d="M4.600 5v2.800q0 .900-.900.900-.700 0-.900-.600M8.600 5.600q-.300-.600-1-.600-.900 0-.900.800 0 .600.900.900.900.300.900 1 0 .900-1 .900-.800 0-1.100-.700" stroke="#4a3a08" stroke-width=".900" fill="none"/></svg>63654245C3093CAF05...</div>
<div class="fr" style="top:283.06px;letter-spacing:-0.043px;"><svg class="fi" viewBox="0 0 10 10"><rect width="10" height="10" rx=".800" fill="#f2c62b"/><path d="M4.600 5v2.800q0 .900-.900.900-.700 0-.900-.600M8.600 5.600q-.300-.600-1-.600-.900 0-.900.800 0 .600.900.900.900.300.900 1 0 .900-1 .900-.800 0-1.100-.700" stroke="#4a3a08" stroke-width=".900" fill="none"/></svg>72542116C63E4BDF14...</div>
<div class="fr" style="top:298.90px;letter-spacing:-0.019px;"><svg class="fi" viewBox="0 0 10 10"><rect width="10" height="10" rx=".800" fill="#f2c62b"/><path d="M4.600 5v2.800q0 .900-.900.900-.700 0-.900-.600M8.600 5.600q-.300-.600-1-.600-.900 0-.900.800 0 .600.900.900.900.300.900 1 0 .900-1 .900-.800 0-1.100-.700" stroke="#4a3a08" stroke-width=".900" fill="none"/></svg>97511760C3093CAFF1...</div>
<div class="fr" style="top:314.74px;letter-spacing:-0.138px;"><svg class="fi" viewBox="0 0 10 10"><rect width="10" height="10" rx=".800" fill="#f2c62b"/><path d="M4.600 5v2.800q0 .900-.900.900-.700 0-.900-.600M8.600 5.600q-.300-.600-1-.600-.900 0-.900.800 0 .600.900.900.900.300.900 1 0 .900-1 .900-.800 0-1.100-.700" stroke="#4a3a08" stroke-width=".900" fill="none"/></svg>AB130690C63E4BDFC...</div>
<div class="fr" style="top:330.58px;letter-spacing:-0.241px;"><svg class="fi" viewBox="0 0 10 10"><rect width="10" height="10" rx=".800" fill="#f2c62b"/><path d="M4.600 5v2.800q0 .900-.900.900-.700 0-.900-.600M8.600 5.600q-.300-.600-1-.600-.900 0-.900.800 0 .600.900.900.900.300.900 1 0 .900-1 .900-.800 0-1.100-.700" stroke="#4a3a08" stroke-width=".900" fill="none"/></svg>AFA00A02C3093CAFC9...</div>
<div class="fr" style="top:346.42px;letter-spacing:.170px;"><svg class="fi" viewBox="0 0 10 10"><rect width="10" height="10" rx=".800" fill="#f2c62b"/><path d="M4.600 5v2.800q0 .900-.900.900-.700 0-.900-.600M8.600 5.600q-.300-.600-1-.600-.900 0-.900.800 0 .600.900.900.900.300.900 1 0 .900-1 .900-.800 0-1.100-.700" stroke="#4a3a08" stroke-width=".900" fill="none"/></svg>app-service.js</div>
<div class="fr" style="top:362.26px;letter-spacing:.170px;"><svg class="fi" viewBox="0 0 10 10"><rect width="10" height="10" rx=".800" fill="#f2c62b"/><path d="M4.600 5v2.800q0 .900-.900.900-.700 0-.900-.600M8.600 5.600q-.300-.600-1-.600-.900 0-.900.800 0 .600.900.900.900.300.900 1 0 .900-1 .900-.800 0-1.100-.700" stroke="#4a3a08" stroke-width=".900" fill="none"/></svg>app.js</div>
<div class="fr sel" style="top:378.10px;letter-spacing:.170px;"><span style="position:absolute;left:23px;top:0;font-size:9px;font-weight:bold;color:#e9b949;letter-spacing:-.2px">{..}</span>app.json</div>
<div class="fr" style="top:393.94px;letter-spacing:.170px;"><svg class="fi" viewBox="0 0 10 10"><path d="M1 .500h8.500L8.600 8.500 5.200 9.700 1.800 8.500z" fill="#3b9be6"/><path d="M3 2.800h4.600l-.200 1.800H3.300M7.200 4.600l-.300 2.800-1.700.600-1.700-.600-.100-1.200" stroke="#fff" stroke-width=".900" fill="none"/></svg>app.wxss</div>
<div class="fr" style="top:409.78px;letter-spacing:-0.193px;"><svg class="fi" viewBox="0 0 10 10"><rect width="10" height="10" rx=".800" fill="#f2c62b"/><path d="M4.600 5v2.800q0 .900-.900.900-.700 0-.900-.600M8.600 5.600q-.300-.600-1-.600-.900 0-.900.800 0 .600.900.900.900.300.900 1 0 .900-1 .900-.800 0-1.100-.700" stroke="#4a3a08" stroke-width=".900" fill="none"/></svg>B52F64F0C3093CAFD3...</div>
<div class="fr" style="top:425.62px;letter-spacing:-0.188px;"><svg class="fi" viewBox="0 0 10 10"><rect width="10" height="10" rx=".800" fill="#f2c62b"/><path d="M4.600 5v2.800q0 .900-.900.900-.700 0-.900-.600M8.600 5.600q-.300-.600-1-.600-.900 0-.900.800 0 .600.900.900.900.300.900 1 0 .900-1 .900-.800 0-1.100-.700" stroke="#4a3a08" stroke-width=".900" fill="none"/></svg>B57A0A42C63E4BDFD...</div>
<div class="fr" style="top:441.46px;letter-spacing:-0.147px;"><svg class="fi" viewBox="0 0 10 10"><rect width="10" height="10" rx=".800" fill="#f2c62b"/><path d="M4.600 5v2.800q0 .900-.900.900-.700 0-.900-.600M8.600 5.600q-.300-.600-1-.600-.900 0-.900.800 0 .600.900.900.900.300.900 1 0 .900-1 .900-.800 0-1.100-.700" stroke="#4a3a08" stroke-width=".900" fill="none"/></svg>B0221547C3093CAFD6...</div>
<div class="fr" style="top:457.30px;letter-spacing:-0.289px;"><svg class="fi" viewBox="0 0 10 10"><rect width="10" height="10" rx=".800" fill="#f2c62b"/><path d="M4.600 5v2.800q0 .900-.900.900-.700 0-.900-.600M8.600 5.600q-.300-.600-1-.600-.900 0-.900.800 0 .600.900.900.900.300.900 1 0 .900-1 .900-.800 0-1.100-.700" stroke="#4a3a08" stroke-width=".900" fill="none"/></svg>CB061072C63E4BDFAD...</div>
<div class="fr" style="top:473.14px;letter-spacing:-0.362px;"><svg class="fi" viewBox="0 0 10 10"><rect width="10" height="10" rx=".800" fill="#f2c62b"/><path d="M4.600 5v2.800q0 .900-.900.900-.700 0-.900-.600M8.600 5.600q-.300-.600-1-.600-.900 0-.900.800 0 .600.900.900.900.300.900 1 0 .900-1 .900-.800 0-1.100-.700" stroke="#4a3a08" stroke-width=".900" fill="none"/></svg>DD8CA1D3C63E4BDFB...</div>
<div class="fr" style="top:488.98px;letter-spacing:-0.384px;"><svg class="fi" viewBox="0 0 10 10"><rect width="10" height="10" rx=".800" fill="#f2c62b"/><path d="M4.600 5v2.800q0 .900-.900.900-.700 0-.900-.600M8.600 5.600q-.300-.600-1-.600-.900 0-.900.800 0 .600.900.900.900.300.900 1 0 .900-1 .900-.800 0-1.100-.700" stroke="#4a3a08" stroke-width=".900" fill="none"/></svg>DEE5BEB1C3093CAFB8...</div>
<div class="fr" style="top:504.82px;letter-spacing:-0.265px;"><svg class="fi" viewBox="0 0 10 10"><rect width="10" height="10" rx=".800" fill="#f2c62b"/><path d="M4.600 5v2.800q0 .900-.900.900-.700 0-.900-.600M8.600 5.600q-.300-.600-1-.600-.900 0-.900.800 0 .600.900.900.900.300.900 1 0 .900-1 .900-.800 0-1.100-.700" stroke="#4a3a08" stroke-width=".900" fill="none"/></svg>EA5C0990C3093CAF8C...</div>
<div class="fr" style="top:520.66px;letter-spacing:-0.36px;"><svg class="fi" viewBox="0 0 10 10"><rect width="10" height="10" rx=".800" fill="#f2c62b"/><path d="M4.600 5v2.800q0 .900-.900.900-.700 0-.900-.600M8.600 5.600q-.300-.600-1-.600-.900 0-.900.800 0 .600.900.900.900.300.900 1 0 .900-1 .900-.800 0-1.100-.700" stroke="#4a3a08" stroke-width=".900" fill="none"/></svg>EA9BD637C63E4BDF8C...</div>
<div class="fr" style="top:536.50px;letter-spacing:.170px;"><svg class="fi" viewBox="0 0 10 10"><rect width="10" height="10" rx=".800" fill="#f2c62b"/><path d="M4.600 5v2.800q0 .900-.900.900-.700 0-.900-.600M8.600 5.600q-.300-.600-1-.600-.900 0-.900.800 0 .600.900.900.900.300.900 1 0 .900-1 .900-.800 0-1.100-.700" stroke="#4a3a08" stroke-width=".900" fill="none"/></svg>page-frame.js</div>
<div class="fr" style="top:552.34px;letter-spacing:.170px;"><span style="position:absolute;left:23px;top:0;font-size:9px;font-weight:bold;color:#e9b949;letter-spacing:-.2px">{..}</span>project.config.json</div>
<div class="fr" style="top:568.18px;letter-spacing:.170px;"><span style="position:absolute;left:23px;top:0;font-size:9px;font-weight:bold;color:#e9b949;letter-spacing:-.2px">{..}</span>sitemap.json</div>
<div class="sh" style="top:599.500px;height:12.500px;line-height:17px;background:#343434;overflow:visible">大纲</div>
</div>
<div class="abs" style="left:450px;top:66px;width:1px;height:634px;background:#252525"></div>
<div class="abs" style="left:307px;top:700px;width:592px;height:21px;background:#383838"></div>
<svg class="abs" style="left:318px;top:705px" width="10" height="10" viewBox="0 0 10 10" fill="none" stroke="#bbb" stroke-width=".900"><circle cx="5" cy="5" r="4"/><path d="M3.300 3.300l3.400 3.400M6.700 3.300L3.300 6.700"/></svg>
<div class="abs" style="left:330px;top:700px;line-height:21px;font-size:8.500px;color:#c0c0c0">0</div>
<svg class="abs" style="left:337px;top:705px" width="10" height="10" viewBox="0 0 10 10" fill="none" stroke="#bbb" stroke-width=".900"><path d="M5 1L9.300 9H.700z"/><path d="M5 4v2.500M5 7.300v.800"/></svg>
<div class="abs" style="left:349px;top:700px;line-height:21px;font-size:8.500px;color:#c0c0c0">0</div>
<div class="abs" style="left:730px;top:700px;line-height:21px;font-size:8.500px;color:#a8a8a8;white-space:nowrap;word-spacing:0">行 1，列 1</div>
<div class="abs" style="left:781px;top:700px;line-height:21px;font-size:8.500px;color:#a8a8a8;white-space:nowrap">空格: 4</div>
<div class="abs" style="left:820px;top:700px;line-height:21px;font-size:8.500px;color:#a8a8a8;white-space:nowrap">UTF-8</div>
<div class="abs" style="left:853px;top:700px;line-height:21px;font-size:8.500px;color:#a8a8a8;white-space:nowrap">LF</div>
<div class="abs" style="left:872px;top:700px;line-height:21px;font-size:8.500px;color:#a8a8a8;white-space:nowrap">JSON</div>
<div id="edtabs" class="abs">
<div class="abs" style="left:0;top:0;width:86px;height:22px;background:#2c2c2c"></div>
<span class="abs" style="left:6.500px;top:0;line-height:21px;font-size:9px;font-weight:bold;color:#e9b949;letter-spacing:-.2px">{..}</span>
<span class="abs" style="left:23.500px;top:0;line-height:22px;font-size:8.900px;font-style:italic;color:#fff;white-space:nowrap">app.json</span>
<svg class="abs" style="left:71px;top:8px" width="7" height="7" viewBox="0 0 7 7"><path d="M.500 .500l6 6M6.500 .500l-6 6" stroke="#e0e0e0" stroke-width="1.100"/></svg>
<svg class="abs" style="left:403px;top:6px" width="10" height="10" viewBox="0 0 10 10" fill="none" stroke="#d0d0d0" stroke-width="1"><rect x="1" y="1" width="8" height="8" rx=".500"/><path d="M5 1v8"/></svg>
<div class="abs" style="left:425px;top:10.2px;width:1.600px;height:1.600px;border-radius:50%;background:#ccc;box-shadow:4px 0 0 #ccc,8px 0 0 #ccc"></div>
</div>
<div id="editor" class="abs">
<svg class="abs" style="left:5px;top:3px" width="10" height="10" viewBox="0 0 10 10" stroke="#727272" stroke-width="1"><path d="M0 1.500h10M0 4h10M0 6.500h10M0 9h10"/></svg>
<svg class="abs" style="left:27px;top:3px" width="8" height="10" viewBox="0 0 8 10" fill="none" stroke="#bbb" stroke-width="1.100"><path d="M1 .800h6v8.200L4 6.500 1 9z"/></svg>
<svg class="abs" style="left:48px;top:4px" width="10" height="8" viewBox="0 0 10 8" fill="none" stroke="#aaa" stroke-width="1.100"><path d="M9.500 4H1M4 .800L.800 4 4 7.200"/></svg>
<svg class="abs" style="left:69px;top:4px" width="10" height="8" viewBox="0 0 10 8" fill="none" stroke="#4a4a4a" stroke-width="1.100"><path d="M.500 4H9M6 .800L9.200 4 6 7.200"/></svg>
<span class="abs" style="left:91px;top:0;line-height:16px;font-size:9px;font-weight:bold;color:#e9b949;letter-spacing:-.2px">{..}</span>
<span class="abs" style="left:108px;top:0;line-height:17px;font-size:9px;color:#a8a8a8;white-space:nowrap">app.json &gt; ...</span>
<div class="cl" style="top:15.83px"><span class="ln">1</span><span style="position:absolute;left:50.800px"><span style="color:#e8d44d;outline:1px solid #6a6a40">{</span></span></div>
<div class="cl" style="top:33.17px"><span class="ln">2</span><span style="position:absolute;left:50.800px">    <span class="q">"</span><span class="k">pages</span><span class="q">"</span><span class="p">: </span><span class="b">[</span></span></div>
<div class="cl" style="top:50.51px"><span class="ln">3</span><span style="position:absolute;left:50.800px">        <span class="q">"</span><span class="s">pages/index/index</span><span class="q">"</span><span class="p">,</span></span></div>
<div class="cl" style="top:67.85px"><span class="ln">4</span><span style="position:absolute;left:50.800px">        <span class="q">"</span><span class="s">pages/index5/index5</span><span class="q">"</span><span class="p">,</span></span></div>
<div class="cl" style="top:85.19px"><span class="ln">5</span><span style="position:absolute;left:50.800px">        <span class="q">"</span><span class="s">pages/index2/index2</span><span class="q">"</span><span class="p">,</span></span></div>
<div class="cl" style="top:102.53px"><span class="ln">6</span><span style="position:absolute;left:50.800px">        <span class="q">"</span><span class="s">pages/mine/index</span><span class="q">"</span><span class="p">,</span></span></div>
<div class="cl" style="top:119.87px"><span class="ln">7</span><span style="position:absolute;left:50.800px">        <span class="q">"</span><span class="s">pages/news/news</span><span class="q">"</span><span class="p">,</span></span></div>
<div class="cl" style="top:137.21px"><span class="ln">8</span><span style="position:absolute;left:50.800px">        <span class="q">"</span><span class="s">pages/tuji/index</span><span class="q">"</span><span class="p">,</span></span></div>
<div class="cl" style="top:154.55px"><span class="ln">9</span><span style="position:absolute;left:50.800px">        <span class="q">"</span><span class="s">pages/video/index</span><span class="q">"</span><span class="p">,</span></span></div>
<div class="cl" style="top:171.89px"><span class="ln">10</span><span style="position:absolute;left:50.800px">        <span class="q">"</span><span class="s">pages/video/help</span><span class="q">"</span><span class="p">,</span></span></div>
<div class="cl" style="top:189.23px"><span class="ln">11</span><span style="position:absolute;left:50.800px">        <span class="q">"</span><span class="s">pages/record/index</span><span class="q">"</span><span class="p">,</span></span></div>
<div class="cl" style="top:206.57px"><span class="ln">12</span><span style="position:absolute;left:50.800px">        <span class="q">"</span><span class="s">pages/recommend/index</span><span class="q">"</span><span class="p">,</span></span></div>
<div class="cl" style="top:223.91px"><span class="ln">13</span><span style="position:absolute;left:50.800px">        <span class="q">"</span><span class="s">pages/recommend/success</span><span class="q">"</span><span class="p">,</span></span></div>
<div class="cl" style="top:241.25px"><span class="ln">14</span><span style="position:absolute;left:50.800px">        <span class="q">"</span><span class="s">pages/weibo/login</span><span class="q">"</span><span class="p">,</span></span></div>
<div class="cl" style="top:258.59px"><span class="ln">15</span><span style="position:absolute;left:50.800px">        <span class="q">"</span><span class="s">pages/inform/index</span><span class="q">"</span><span class="p">,</span></span></div>
<div class="cl" style="top:275.93px"><span class="ln">16</span><span style="position:absolute;left:50.800px">        <span class="q">"</span><span class="s">pages/xhsimage/index</span><span class="q">"</span><span class="p">,</span></span></div>
<div class="cl" style="top:293.27px"><span class="ln">17</span><span style="position:absolute;left:50.800px">        <span class="q">"</span><span class="s">pages/wbimage/index</span><span class="q">"</span><span class="p">,</span></span></div>
<svg class="abs" style="left:37px;top:21.83px" width="8" height="5" viewBox="0 0 8 5" fill="none" stroke="#c8c8c8" stroke-width="1.100"><path d="M.800 .800L4 4 7.200 .800"/></svg>
<svg class="abs" style="left:37px;top:39.17px" width="8" height="5" viewBox="0 0 8 5" fill="none" stroke="#c8c8c8" stroke-width="1.100"><path d="M.800 .800L4 4 7.200 .800"/></svg>
<div class="abs" style="left:51px;top:33.17px;width:1px;height:280px;background:#3c3c3c"></div>
<div class="abs" style="left:70px;top:50.51px;width:1px;height:270px;background:#3c3c3c"></div>
<div class="abs" style="left:438px;top:16px;width:1px;height:293px;background:#303030"></div>
<div class="abs" style="left:442.500px;top:17.500px;width:3px;height:3px;background:#c8c8c8"></div>
<div class="abs" style="left:443px;top:285px;width:3px;height:3px;background:#c8c8c8"></div>
</div>
<div id="dbgtop" class="abs"></div>
<div id="dbg" class="abs">
<div class="abs" style="left:0;top:0;width:448px;height:18px;background:#2f2f2f"></div>
<div class="dt" style="left:14px;color:#f0f0f0;font-weight:bold">调试器</div>
<div class="abs" style="left:14px;top:16.500px;width:25px;height:1px;background:#ddd"></div>
<div class="abs" style="left:45px;top:3px;width:28px;height:11px;border-radius:5.500px;background:#4d4d4d;color:#fff;font-size:7.800px;line-height:11px;text-align:center">11, 26</div>
<div class="dt" style="left:86px">问题</div>
<div class="dt" style="left:116px">输出</div>
<div class="dt" style="left:146px">终端</div>
<div class="dt" style="left:177px">代码质量</div>
<svg class="abs" style="left:402px;top:6px" width="9" height="6" viewBox="0 0 9 6" fill="none" stroke="#d0d0d0" stroke-width="1.100"><path d="M.800 5L4.500 1.200 8.200 5"/></svg>
<svg class="abs" style="left:426px;top:5px" width="7" height="7" viewBox="0 0 7 7"><path d="M.500 .500l6 6M6.500 .500l-6 6" stroke="#e0e0e0" stroke-width="1.100"/></svg>
<div class="abs" style="left:0;top:18px;width:448px;height:19px;background:#2f2f2f;border-bottom:1px solid #444"></div>
<svg class="abs" style="left:6px;top:22px" width="11" height="11" viewBox="0 0 11 11" fill="none" stroke="#aaa" stroke-width="1"><path d="M9 4V1.200H1.200V9H4"/><path d="M5 5l1.800 5 1-2 2-1z" fill="#aaa"/></svg>
<div class="abs" style="left:24px;top:21px;width:1px;height:13px;background:#444"></div>
<div class="abs" style="left:133px;top:18px;width:48px;height:19px;background:#000"></div>
<div class="vt" style="left:38px">Wxml</div>
<div class="vt" style="left:77px">Performance</div>
<div class="vt" style="left:142px">Console</div>
<div class="vt" style="left:189px">Sources</div>
<div class="vt" style="left:236px">Network</div>
<div class="vt" style="left:283px;color:#aaa;font-size:10px;top:17px">»</div>
<svg class="abs" style="left:317px;top:23px" width="9" height="9" viewBox="0 0 9 9"><circle cx="4.500" cy="4.500" r="4" fill="#e0454a"/><path d="M3 3l3 3M6 3L3 6" stroke="#fff" stroke-width="1"/></svg>
<div class="vt" style="left:328px">11</div>
<svg class="abs" style="left:341px;top:23px" width="9" height="9" viewBox="0 0 9 9"><path d="M4.500 .500L8.800 8.500H.200z" fill="#f0c020"/></svg>
<div class="vt" style="left:352px">26</div>
<svg class="abs" style="left:364px;top:23px" width="8" height="8" viewBox="0 0 8 8"><path d="M.500 .500h7v5h-4l-1.500 2v-2h-1.500z" fill="#3b86e8"/></svg>
<div class="vt" style="left:374px">9</div>
<div class="abs" style="left:384px;top:21px;width:1px;height:13px;background:#444"></div>
<svg class="abs" style="left:391px;top:22px" width="11" height="11" viewBox="0 0 11 11"><path d="M5.500 3.400a2.100 2.100 0 1 0 0 4.200 2.100 2.100 0 0 0 0-4.200zM4.600 .500h1.800l.300 1.400 1 .500 1.300-.700 1.200 1.300-.800 1.200.400 1 1.400.400v1.700l-1.400.400-.400 1 .800 1.200-1.200 1.300-1.300-.700-1 .500-.300 1.400H4.600l-.300-1.400-1-.500-1.300.700L.800 9.900l.800-1.200-.400-1-1.400-.400V5.600l1.400-.400.400-1-.800-1.200L2 1.700l1.300.700 1-.500z" fill="#b8b8b8" fill-rule="evenodd"/></svg>
<div class="abs" style="left:416px;top:22px;width:2px;height:2px;background:#bbb;box-shadow:0 4px 0 #bbb,0 8px 0 #bbb"></div>
<svg class="abs" style="left:431px;top:22px" width="12" height="11" viewBox="0 0 12 11" fill="none" stroke="#999" stroke-width="1.100"><rect x="3.500" y="1" width="8" height="6.500"/><path d="M3.500 3.500H.800v6.700h8V7.500"/></svg>
<div class="abs" style="left:0;top:38px;width:448px;height:19px;background:#2f2f2f;border-bottom:1px solid #444"></div>
<svg class="abs" style="left:6px;top:42px" width="11" height="10" viewBox="0 0 11 10" fill="none" stroke="#aaa" stroke-width="1"><rect x=".800" y=".800" width="9.400" height="8.400"/><path d="M3.200 .800v8.400"/><path d="M5.300 3.200L7.800 5 5.300 6.800z" fill="#aaa"/></svg>
<svg class="abs" style="left:27px;top:42px" width="10" height="10" viewBox="0 0 10 10" fill="none" stroke="#aaa" stroke-width="1.100"><circle cx="5" cy="5" r="4"/><path d="M2.200 2.200l5.600 5.600"/></svg>
<div class="abs" style="left:45px;top:40px;width:1px;height:13px;background:#444"></div>
<div class="vt" style="left:52px;top:38px">appservice</div>
<div class="abs" style="left:139px;top:46px;border:2.500px solid transparent;border-top:3.500px solid #aaa"></div>
<div class="abs" style="left:151px;top:40px;width:1px;height:13px;background:#444"></div>
<svg class="abs" style="left:158px;top:43px" width="12" height="8" viewBox="0 0 12 8"><path d="M.500 4Q6-2.500 11.500 4 6 10.500.500 4z" fill="none" stroke="#aaa" stroke-width="1.100"/><circle cx="6" cy="4" r="1.900" fill="#aaa"/></svg>
<div class="abs" style="left:182px;top:40px;width:94px;height:15px;background:#202020;border:1px solid #3a3a3a"></div>
<div class="vt" style="left:186px;top:38px;color:#ddd">Filter</div>
<div class="vt" style="left:283px;top:38px">Default levels <span style="font-size:6px;color:#aaa;position:relative;top:-1px">▼</span></div>
<div class="abs" style="left:382px;top:40px;width:1px;height:13px;background:#444"></div>
<div class="vt" style="left:390px;top:38px;color:#9a9a9a">2 hidden</div>
<svg class="abs" style="left:431px;top:42px" width="11" height="11" viewBox="0 0 11 11"><path d="M5.500 3.400a2.100 2.100 0 1 0 0 4.200 2.100 2.100 0 0 0 0-4.200zM4.600 .500h1.800l.300 1.400 1 .500 1.300-.700 1.200 1.300-.800 1.200.400 1 1.400.400v1.700l-1.400.400-.400 1 .800 1.200-1.200 1.300-1.300-.700-1 .500-.300 1.400H4.600l-.300-1.400-1-.500-1.300.700L.800 9.900l.800-1.200-.400-1-1.400-.400V5.600l1.400-.400.400-1-.800-1.200L2 1.700l1.300.700 1-.500z" fill="#b8b8b8" fill-rule="evenodd"/></svg>
<div class="cr " style="top:56.70px;height:16.7px;line-height:20.200px"><svg style="position:absolute;left:5px;top:5px" width="7" height="7" viewBox="0 0 8 8"><path d="M.500 .500h7v5h-4l-1.500 2v-2h-1.500z" fill="#3b86e8"/></svg><span class="t">Some messages have been moved to the Issues panel.</span><span class="l"><b style="color:#fff">View issues</b></span></div>
<div class="cr w" style="top:73.40px;height:14.4px;"><svg style="position:absolute;left:4.500px;top:3px" width="8" height="8" viewBox="0 0 9 9"><path d="M4.500 .500L8.800 8.500H.200z" fill="#f2c428"/></svg><span class="t">[sitemap <span style="font-size:8.750px;font-weight:normal">索引情况提示</span>] <span style="font-size:8.750px;font-weight:normal">根据</span> sitemap <span style="font-size:8.750px;font-weight:normal">的规则</span>[0]<span style="font-size:8.750px;font-weight:normal">，当前页面</span> [pages/index/index] <span style="font-size:8.750px;font-weight:normal">将被索引</span></span><span class="l"></span></div>
<div class="cr w" style="top:87.80px;height:25px;line-height:10.100px;padding-top:3.400px"><svg style="position:absolute;left:4.500px;top:3px" width="8" height="8" viewBox="0 0 9 9"><path d="M4.500 .500L8.800 8.500H.200z" fill="#f2c428"/></svg><span class="t"><span style="font-size:5px;color:#aaa;position:relative;top:-1px;margin-right:2px">▶</span>[Event] 21 listeners of event AppRoute have been added,
possibly causing memory leak.</span><span class="l">VM293 WAService.js:2</span></div>
<div class="cr " style="top:112.80px;height:14.4px;"><span class="t">[system] No. of subpackages: 22</span><span class="l">VM293 WAService.js:2</span></div>
<div class="cr " style="top:127.20px;height:14.4px;"><span class="t">[system] LazyCodeLoading: false</span><span class="l">VM293 WAService.js:2</span></div>
<div class="cr " style="top:141.60px;height:14.4px;"><span class="t">App Show</span><span class="l">main.js?t=wechat&amp;s=1…90542268545c0b1:221</span></div>
<div class="cr " style="top:156.00px;height:14.4px;"><span class="t">App Show</span><span class="l">main.js?t=wechat&amp;s=1…90542268545c0b1:221</span></div>
<div class="cr " style="top:170.40px;height:14.4px;"><span class="t">App Launch</span><span class="l">main.js?t=wechat&amp;s=1…1c340bbfb9cb3261:64</span></div>
<div class="cr " style="top:184.80px;height:14.4px;"><span class="t">App Show</span><span class="l">main.js?t=wechat&amp;s=1…1c340bbfb9cb3261:67</span></div>
<div class="cr " style="top:199.20px;height:14.4px;"><span class="t">App Launch</span><span class="l">main.js?t=wechat&amp;s=1…1c340bbfb9cb3261:64</span></div>
<div class="cr " style="top:213.60px;height:14.4px;"><span class="t">App Show</span><span class="l">main.js?t=wechat&amp;s=1…1c340bbfb9cb3261:67</span></div>
<div class="cr " style="top:228.00px;height:14.4px;"><span class="t">App Show</span><span class="l">main.js?t=wechat&amp;s=1…90542268545c0b1:221</span></div>
<div class="cr " style="top:242.40px;height:14.4px;"><span class="t">App Launch</span><span class="l">main.js?t=wechat&amp;s=1…1c340bbfb9cb3261:64</span></div>
<div class="cr " style="top:256.80px;height:14.4px;"><span class="t">App Show</span><span class="l">main.js?t=wechat&amp;s=1…1c340bbfb9cb3261:67</span></div>
<div class="cr " style="top:271.20px;height:14.4px;"><span class="t">App Launch</span><span class="l">main.js?t=wechat&amp;s=1…209f879f513b7c8c:66</span></div>
<div class="cr " style="top:285.60px;height:14.4px;"><span class="t">App Show</span><span class="l">main.js?t=wechat&amp;s=1…209f879f513b7c8c:69</span></div>
<div class="abs" style="left:438px;top:57px;width:10px;height:246px;background:#2a2a2a"></div>
<div class="abs" style="left:438px;top:57px;width:10px;height:38px;background:#454545"></div>
</div>
<div class="abs" style="left:0;top:720px;width:899px;height:1px;background:#e4e4e4"></div>
<div class="abs" style="left:0;top:22px;width:1px;height:698px;background:#252525"></div>
</div>
</body></html>
